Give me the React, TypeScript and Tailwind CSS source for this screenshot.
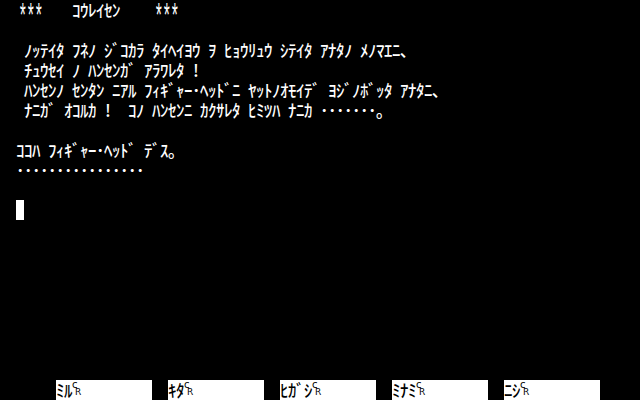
import React from "react";

const ROWS: string[] = [
  "  ***    ｺｳﾚｲｾﾝ    ***",
  "",
  "   ﾉｯﾃｲﾀ ﾌﾈﾉ ｼﾞｺｶﾗ ﾀｲﾍｲﾖｳ ｦ ﾋｮｳﾘｭｳ ｼﾃｲﾀ ｱﾅﾀﾉ ﾒﾉﾏｴﾆ､",
  "   ﾁｭｳｾｲ ﾉ ﾊﾝｾﾝｶﾞ ｱﾗﾜﾚﾀ !",
  "   ﾊﾝｾﾝﾉ ｾﾝﾀﾝ ﾆｱﾙ ﾌｨｷﾞｬｰ･ﾍｯﾄﾞﾆ ﾔｯﾄﾉｵﾓｲﾃﾞ ﾖｼﾞﾉﾎﾞｯﾀ ｱﾅﾀﾆ､",
  "   ﾅﾆｶﾞ ｵｺﾙｶ !  ｺﾉ ﾊﾝｾﾝﾆ ｶｸｻﾚﾀ ﾋﾐﾂﾊ ﾅﾆｶ ･･･････｡",
  "",
  "  ｺｺﾊ ﾌｨｷﾞｬｰ･ﾍｯﾄﾞ ﾃﾞｽ｡",
  "  ････････････････",
];

const FKEYS = ["ﾐﾙ", "ｷﾀ", "ﾋｶﾞｼ", "ﾐﾅﾐ", "ﾆｼ"];

function Cell({ ch }: { ch: string }) {
  if (ch === "*") {
    return (
      <span className="inline-block w-[8px] h-[20px] shrink-0 overflow-visible">
        <span className="inline-block w-[8px] text-center text-[34px] leading-[37px] scale-x-[0.45] font-['Liberation_Mono',monospace]">
          *
        </span>
      </span>
    );
  }
  return (
    <span className="inline-block w-[8px] h-[20px] shrink-0 text-center overflow-visible whitespace-pre">
      {ch}
    </span>
  );
}

function Line({ text }: { text: string }) {
  return (
    <div className="flex h-[20px] leading-[19px]">
      {Array.from(text).map((c, i) => (
        <Cell key={i} ch={c} />
      ))}
    </div>
  );
}

function CrGlyph() {
  return (
    <span className="relative inline-block w-[8px] h-[20px] shrink-0">
      <span className="absolute left-[0px] top-[0px] text-[10px] leading-[10px] font-['DejaVu_Sans',sans-serif]">
        c
      </span>
      <span className="absolute left-[3px] top-[8px] text-[9px] leading-[9px] font-['DejaVu_Sans',sans-serif]">
        R
      </span>
    </span>
  );
}

export default function App() {
  const rows: React.ReactNode[] = [];
  for (let r = 0; r < 19; r++) {
    if (r === 10) {
      rows.push(
        <div key={r} className="flex h-[20px] pl-[16px]">
          <div className="w-[8px] h-[20px] bg-white" />
        </div>
      );
    } else {
      rows.push(<Line key={r} text={ROWS[r] ?? ""} />);
    }
  }
  return (
    <div className="w-[640px] h-[400px] bg-black text-white overflow-hidden flex flex-col font-['Noto_Sans_CJK_JP',sans-serif] text-[17px] font-medium">
      {rows}
      <div className="flex h-[20px] pl-[56px] gap-[16px]">
        {FKEYS.map((k) => (
          <div key={k} className="w-[96px] h-[20px] bg-white text-black flex leading-[19px]">
            {Array.from(k).map((c, i) => (
              <Cell key={i} ch={c} />
            ))}
            <CrGlyph />
          </div>
        ))}
      </div>
    </div>
  );
}
